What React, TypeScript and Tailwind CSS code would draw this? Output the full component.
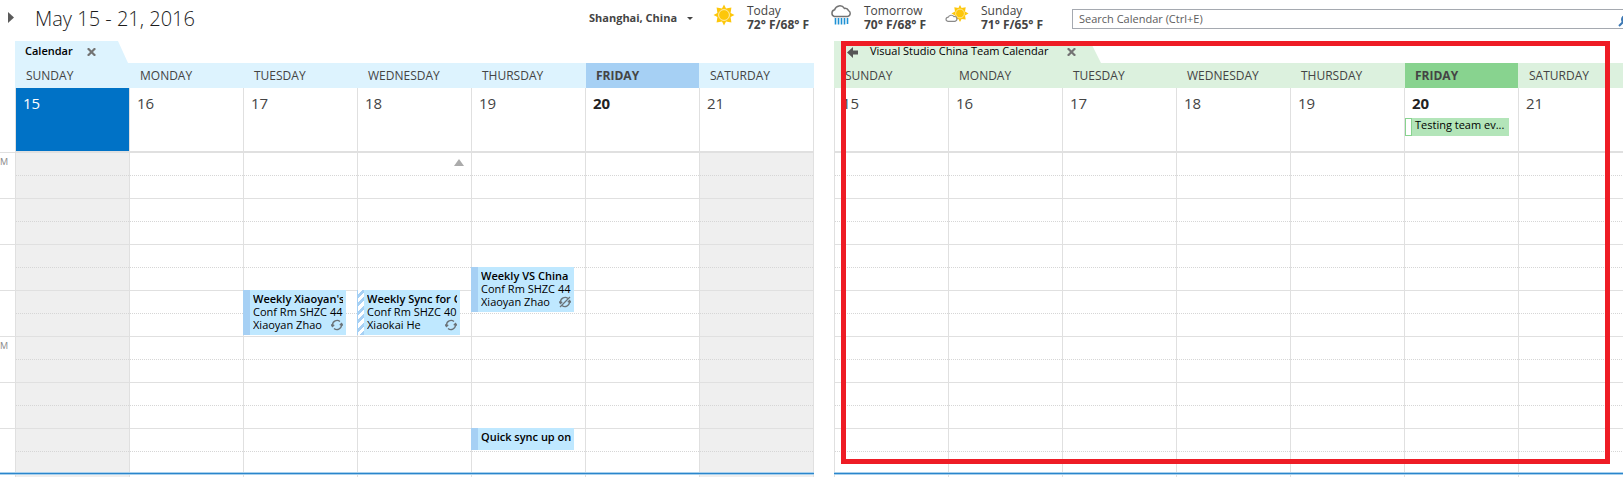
import React from "react";

const DAYS = ["SUNDAY", "MONDAY", "TUESDAY", "WEDNESDAY", "THURSDAY", "FRIDAY", "SATURDAY"];
const TODAY = 5;

type CalEvent = { title: string; place?: string; who?: string; slot: string; bar: string; icon?: "repeat" | "exception" };

const EVENTS: Record<number, CalEvent[]> = {
  2: [{ title: "Weekly Xiaoyan's", place: "Conf Rm SHZC 44", who: "Xiaoyan Zhao", slot: "row-[7/9]", bar: "bg-[#a6d0f4]", icon: "repeat" }],
  3: [
    {
      title: "Weekly Sync for C",
      place: "Conf Rm SHZC 40",
      who: "Xiaokai He",
      slot: "row-[7/9]",
      bar: "border-l border-[#a6d0f4] bg-[repeating-linear-gradient(135deg,#fff_0px,#fff_3px,#a6d0f4_3px,#a6d0f4_6px)]",
      icon: "repeat",
    },
  ],
  4: [
    { title: "Weekly VS China", place: "Conf Rm SHZC 44", who: "Xiaoyan Zhao", slot: "row-[6/8]", bar: "bg-[#a6d0f4]", icon: "exception" },
    { title: "Quick sync up on", slot: "row-[13/14]", bar: "bg-[#a6d0f4]" },
  ],
};

const ROWS = [
  "row-[1/2]", "row-[2/3]", "row-[3/4]", "row-[4/5]", "row-[5/6]", "row-[6/7]", "row-[7/8]",
  "row-[8/9]", "row-[9/10]", "row-[10/11]", "row-[11/12]", "row-[12/13]", "row-[13/14]", "row-[14/15]",
];

function RepeatIcon({ crossed }: { crossed: boolean }) {
  return (
    <svg viewBox="0 0 12 12" className="size-3 shrink-0" fill="none" stroke="#6b7378" strokeWidth="1.3">
      <path d="M1.5 7.5V6A4.5 4.5 0 0 1 9 2.6M10.5 4.5V6A4.5 4.5 0 0 1 3 9.4" />
      <path d="M0 5.5L1.5 7.5L3.2 5.8M12 6.5L10.5 4.5L8.8 6.2" />
      {crossed && <path d="M1 11L11 1" />}
    </svg>
  );
}

function CloseIcon() {
  return (
    <svg viewBox="0 0 9 8" className="h-2 w-[9px]" stroke="#737373" strokeWidth="2.2">
      <path d="M.8 0.3L8.2 7.7M8.2 0.3L.8 7.7" />
    </svg>
  );
}

function SunIcon() {
  return (
    <svg viewBox="0 0 22 22" className="size-[22px] shrink-0">
      <path
        fill="#fdc70a"
        d="M11 .5L13 4.4L18.4 3.6L17.6 9L21.5 11L17.6 13L18.4 18.4L13 17.6L11 21.5L9 17.6L3.6 18.4L4.4 13L.5 11L4.4 9L3.6 3.6L9 4.4Z"
      />
      <circle cx="11" cy="11" r="5.4" fill="#fdc70a" stroke="#ffedb0" strokeWidth="1" />
    </svg>
  );
}

function RainIcon() {
  return (
    <svg viewBox="0 0 22 22" className="size-[22px] shrink-0" fill="none">
      <path stroke="#737373" strokeWidth="1.5" d="M4.3 12.5A3.5 3.5 0 0 1 4.6 5.8A5.4 5.4 0 0 1 14.4 4.4A4 4 0 0 1 18.6 6.6A3.2 3.2 0 0 1 17.8 12.5Z" />
      <path stroke="#1e91d4" strokeWidth="1.6" d="M5.5 14V20.5M8.5 14V20.5M11.5 14V20.5M14.5 14V20.5M17.5 14V20" />
    </svg>
  );
}

function PartlyIcon() {
  return (
    <svg viewBox="0 0 24 22" className="-ml-0.5 h-[22px] w-6 shrink-0">
      <path
        fill="#fdc70a"
        d="M15 1L16.6 4L20.7 3.3L20 7.4L23.5 9.5L20 11.5L20.7 15.6L16.6 15L15 18L13.4 15L9.3 15.6L10 11.5L6.5 9.5L10 7.4L9.3 3.3L13.4 4Z"
      />
      <circle cx="15" cy="9.5" r="4.4" fill="#fdc70a" stroke="#ffedb0" strokeWidth=".8" />
      <path fill="#fff" stroke="#8a8a8a" strokeWidth="1.2" d="M3 17.3A2 2 0 0 1 3.2 13.2A3.4 3.4 0 0 1 9 12.6A2.4 2.4 0 0 1 10 17.3Z" />
    </svg>
  );
}

function Weather({ day, temps, icon }: { day: string; temps: string; icon: React.ReactNode }) {
  return (
    <div className="flex w-[117px] shrink-0 items-start gap-3 pt-1 whitespace-nowrap text-[#444]">
      {icon}
      <div className="text-[12px] leading-[14px]">
        <div>{day}</div>
        <div className="font-bold">{temps}</div>
      </div>
    </div>
  );
}

function EventCard({ event }: { event: CalEvent }) {
  return (
    <button
      type="button"
      className={`z-10 col-start-1 -ml-px -mt-px mb-0.5 mr-[11px] flex min-w-0 overflow-hidden bg-[#bfe8ff] text-left text-[11px] leading-[13px] text-black ${event.slot} ${event.place ? "" : "mb-0"}`}
    >
      <span className={`w-[7px] shrink-0 self-stretch ${event.bar}`} />
      <span className="ml-[3px] mr-[3px] mt-0.5 block min-w-0 flex-1 overflow-hidden whitespace-nowrap">
        <span className="block font-semibold">{event.title}</span>
        {event.place && <span className="block">{event.place}</span>}
        {event.who && (
          <span className="flex items-center justify-between">
            {event.who}
            {event.icon && <RepeatIcon crossed={event.icon === "exception"} />}
          </span>
        )}
      </span>
    </button>
  );
}

function BottomRule() {
  return <div className="h-[3px] border-y border-[#a9d0ec] bg-[#2a86cc]" />;
}

function Calendar({ tab, green = false, children }: { tab: React.ReactNode; green?: boolean; children?: React.ReactNode }) {
  const shade = (i: number) => (!green && (i === 0 || i === 6) ? "bg-[#efefef]" : "");
  return (
    <section className="relative flex min-w-0 flex-1 flex-col">
      {tab}
      <div className={`grid grid-cols-7 pr-px text-[12px] leading-[25px] text-[#444] ${green ? "bg-[#dcf1de]" : "bg-[#ddf3fe]"}`}>
        {DAYS.map((d, i) => (
          <div
            key={d}
            className={`ml-px pl-2.5 ${i === TODAY ? `font-bold ${green ? "bg-[#88d38f]" : "bg-[#a6d0f4]"}` : ""}`}
          >
            {d}
          </div>
        ))}
      </div>
      <div className="grid grid-cols-7 border-b-2 border-r border-[#e0e0e0]">
        {DAYS.map((d, i) => (
          <div
            key={d}
            className={`h-[63px] border-l border-[#e0e0e0] pt-[5px] text-[15px] leading-[21px] ${
              !green && i === 0 ? "bg-[#0072c6] text-white" : i === TODAY ? "font-bold text-[#222]" : "text-[#444]"
            }`}
          >
            <div className="pl-[7px]">{15 + i}</div>
            {green && i === TODAY && (
              <button
                type="button"
                className="mt-1 flex h-[18px] w-[104px] bg-[#b3e5b9] text-left text-[11px] font-normal leading-[14px] text-black"
              >
                <span className="mr-[3px] w-[7px] shrink-0 self-stretch border border-[#88d38f] bg-white" />
                <span className="whitespace-nowrap">Testing team ev...</span>
              </button>
            )}
          </div>
        ))}
      </div>
      <div className="grid grid-cols-7 border-r border-[#e0e0e0]">
        {DAYS.map((d, i) => (
          <div
            key={d}
            className={`grid grid-cols-[minmax(0,1fr)] grid-rows-[repeat(13,23px)_20px] border-l border-[#e0e0e0] ${shade(i)}`}
          >
            {ROWS.map((row, r) => (
              <div
                key={row}
                className={`col-start-1 flex items-start justify-end pr-[7px] pt-1.5 ${row} ${
                  r === 13 ? "" : r % 2 ? "border-b border-[#e0e0e0]" : "border-b border-dotted border-[#d6d6d6]"
                }`}
              >
                {!green && i === 3 && r === 0 && (
                  <svg viewBox="0 0 10 7" className="h-[7px] w-2.5" fill="#ababab">
                    <path d="M5 0L10 7H0Z" />
                  </svg>
                )}
              </div>
            ))}
            {!green && EVENTS[i]?.map((e) => <EventCard key={e.title} event={e} />)}
          </div>
        ))}
      </div>
      <BottomRule />
      <div className="grid h-0.5 grid-cols-7 border-r border-[#e0e0e0]">
        {DAYS.map((d, i) => (
          <div key={d} className={`border-l border-[#e0e0e0] ${shade(i)}`} />
        ))}
      </div>
      {children}
    </section>
  );
}

export default function App() {
  return (
    <div className="w-full overflow-hidden bg-white font-['Open_Sans','Noto_Sans',sans-serif]">
      <div className="w-[calc(100%+10px)]">
        <header className="flex h-[41px] items-start">
          <button type="button" aria-label="Expand" className="ml-2 mt-3 shrink-0">
            <svg viewBox="0 0 6 11" className="h-[11px] w-1.5" fill="#5a5a5a">
              <path d="M0 0L6 5.5L0 11Z" />
            </svg>
          </button>
          <h1 className="ml-[21px] mt-1.5 w-[554px] shrink-0 text-[20px] font-light leading-[26px] text-[#1c1c1c]">May 15 - 21, 2016</h1>
          <button type="button" className="mt-2.5 flex w-[124px] shrink-0 items-center gap-2.5 text-[11px] font-bold leading-4 text-[#444]">
            Shanghai, China
            <svg viewBox="0 0 6 3" className="h-[3px] w-1.5" fill="#444">
              <path d="M0 0H6L3 3Z" />
            </svg>
          </button>
          <Weather day="Today" temps="72° F/68° F" icon={<SunIcon />} />
          <Weather day="Tomorrow" temps="70° F/68° F" icon={<RainIcon />} />
          <Weather day="Sunday" temps="71° F/65° F" icon={<PartlyIcon />} />
          <div className="ml-2 mt-[9px] flex h-5 flex-1 items-center border border-[#a5a9b0] pr-0.5">
            <input
              aria-label="Search Calendar"
              placeholder="Search Calendar (Ctrl+E)"
              className="min-w-0 flex-1 bg-transparent pl-1.5 text-[11px] leading-4 outline-none placeholder:text-[#5c5c5c]"
            />
            <svg viewBox="0 0 12 12" className="mt-1 size-3" fill="none" stroke="#3c78b4" strokeWidth="2">
              <circle cx="7.5" cy="4.5" r="3.5" />
              <path d="M5 7L1 11" />
            </svg>
          </div>
        </header>
        <main className="flex">
          <div className="w-[15px] shrink-0 overflow-hidden pt-[111px] text-[9px] leading-[18px] text-[#8a8a8a]">
            {["M", "", "", "", "M", "", ""].map((label, i) => (
              <div key={i} className={`border-t border-[#e0e0e0] ${i === 6 ? "h-11" : "h-[46px]"}`}>
                {label}
              </div>
            ))}
            <BottomRule />
          </div>
          <Calendar
            tab={
              <div className="flex h-[22px] w-[113px] items-center gap-3.5 bg-[#ddf3fe] pl-2.5 text-[11px] font-semibold text-black [clip-path:polygon(0_0,103px_0,113px_100%,0_100%)]">
                <span className="pb-0.5">Calendar</span>
                <button type="button" aria-label="Close Calendar">
                  <CloseIcon />
                </button>
              </div>
            }
          />
          <div className="w-5 shrink-0" />
          <Calendar
            green
            tab={
              <div className="flex h-[22px] w-[267px] items-center bg-[#dcf1de] pl-[13px] text-[11px] text-black [clip-path:polygon(0_0,256px_0,267px_100%,0_100%)]">
                <button type="button" aria-label="Overlay" className="mr-3">
                  <svg viewBox="0 0 11 11" className="size-[11px]" fill="#555">
                    <path d="M0 5.5L6 0V3.5H11V7.5H6V11Z" />
                  </svg>
                </button>
                <span className="w-[197px] whitespace-nowrap pb-0.5">Visual Studio China Team Calendar</span>
                <button type="button" aria-label="Close Visual Studio China Team Calendar">
                  <CloseIcon />
                </button>
              </div>
            }
          >
            <div className="pointer-events-none absolute bottom-[13px] left-[7px] right-[23px] top-0 z-20 border-5 border-[#ee1c25]" />
          </Calendar>
        </main>
      </div>
    </div>
  );
}
